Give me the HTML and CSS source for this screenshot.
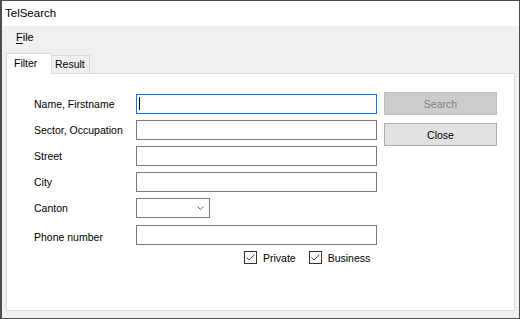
FILE: index.html
```html
<!DOCTYPE html>
<html lang="en">
<head>
    <meta charset="UTF-8">
    <title>TelSearch</title>
    <link rel="stylesheet" href="styles.css">
</head>
<body>
    <div class="window">
        <div class="titlebar">TelSearch</div>

        <div class="menubar">
            <span class="menu-item"><u>F</u>ile</span>
        </div>

        <div class="tabs">
            <div class="tab-strip">
                <div class="tab active">Filter</div>
                <div class="tab">Result</div>
            </div>

            <div class="panel">
                <div class="form">
                    <label class="field-label">Name, Firstname</label>
                    <span class="input-wrap">
                        <input class="text-input focused" type="text">
                        <span class="caret"></span>
                    </span>

                    <label class="field-label">Sector, Occupation</label>
                    <input class="text-input" type="text">

                    <label class="field-label">Street</label>
                    <input class="text-input" type="text">

                    <label class="field-label">City</label>
                    <input class="text-input" type="text">

                    <label class="field-label">Canton</label>
                    <div class="combo">
                        <svg width="7" height="4" viewBox="0 0 7 4">
                            <polyline points="0.5,0.5 3.5,3.5 6.5,0.5" fill="none" stroke="#606060" stroke-width="1"/>
                        </svg>
                    </div>

                    <label class="field-label phone-label">Phone number</label>
                    <input class="text-input phone-input" type="text">

                    <div class="checks">
                        <span class="check">
                            <span class="check-box">
                                <svg width="11" height="11" viewBox="0 0 11 11">
                                    <polyline points="1.5,5.5 4,8 9.5,2.5" fill="none" stroke="#4a4a4a" stroke-width="1"/>
                                </svg>
                            </span>
                            Private
                        </span>
                        <span class="check">
                            <span class="check-box">
                                <svg width="11" height="11" viewBox="0 0 11 11">
                                    <polyline points="1.5,5.5 4,8 9.5,2.5" fill="none" stroke="#4a4a4a" stroke-width="1"/>
                                </svg>
                            </span>
                            Business
                        </span>
                    </div>
                </div>

                <div class="actions">
                    <button class="btn" disabled>Search</button>
                    <button class="btn">Close</button>
                </div>
            </div>
        </div>
    </div>
</body>
</html>
```

FILE: styles.css
```css
* {
    margin: 0;
    padding: 0;
    box-sizing: border-box;
}

body {
    font-family: 'Liberation Sans', Arial, sans-serif;
    color: #000000;
    background-color: #ffffff;
}

.window {
    width: 520px;
    height: 319px;
    border: 1px solid #4d4d4d;
    border-left-width: 2px;
    background-color: #f0f0f0; /* Window gray */
    display: flex;
    flex-direction: column;
}

.titlebar {
    height: 25px;
    line-height: 25px;
    padding-left: 3px;
    background-color: #ffffff;
    font-size: 11.5px;
}

.menubar {
    height: 22px;
    line-height: 22px;
    padding-left: 14px;
    font-size: 11px;
}

.menu-item u {
    text-decoration-thickness: 1px;
    text-underline-offset: 2px;
}

/* Tab control */
.tabs {
    margin: 5px 4px 0 4px;
    font-size: 10.5px;
}

.tab-strip {
    display: flex;
    align-items: flex-end;
    height: 20px;
}

.tab {
    width: 38px;
    height: 18px;
    line-height: 17px;
    padding-left: 3px;
    border: 1px solid #d9d9d9;
    border-bottom: none;
    border-left: none;
    background-color: #f0f0f0;
}

.tab.active {
    width: 46px;
    height: 21px;
    line-height: 18px;
    padding-left: 7px;
    border-left: 1px solid #d9d9d9;
    background-color: #ffffff;
    margin-bottom: -1px;
    position: relative;
    z-index: 1;
}

.panel {
    width: 509px;
    height: 238px;
    border: 1px solid #d9d9d9;
    background-color: #ffffff;
    display: flex;
    align-items: flex-start;
    padding: 20px 0 0 27px;
}

/* Form fields */
.form {
    display: grid;
    grid-template-columns: 102px 241px;
    grid-auto-rows: 20px;
    row-gap: 6px;
}

.field-label {
    align-self: center;
    font-size: 10.5px;
}

.phone-label,
.phone-input {
    margin-top: 1px;
}

.phone-label {
    align-self: center;
    margin-top: 5px;
}

.text-input {
    width: 241px;
    height: 20px;
    border: 1px solid #7a7a7a;
    background-color: #ffffff;
    outline: none;
    font: inherit;
}

.text-input.focused {
    border-color: #0078d7; /* Focus blue */
}

.input-wrap {
    position: relative;
    display: block;
}

.caret {
    position: absolute;
    left: 3px;
    top: 3px;
    width: 1px;
    height: 13px;
    background-color: #000000;
}

.combo {
    width: 74px;
    height: 20px;
    border: 1px solid #7a7a7a;
    display: flex;
    justify-content: flex-end;
    align-items: center;
    padding-right: 5px;
}

.checks {
    grid-column: 2;
    display: flex;
    align-items: center;
    gap: 13px;
    padding-left: 108px;
    margin-top: 1px;
    height: 13px;
    align-self: start;
}

.check {
    display: flex;
    align-items: center;
    gap: 6px;
}

.check-box {
    width: 13px;
    height: 13px;
    border: 1px solid #333333;
    background-color: #ffffff;
    display: flex;
}

/* Buttons */
.actions {
    display: flex;
    flex-direction: column;
    gap: 8px;
    margin: -2px 0 0 7px;
}

.btn {
    width: 113px;
    height: 23px;
    border: 1px solid #adadad;
    background-color: #e1e1e1;
    font-family: inherit;
    font-size: 10.5px;
    color: #000000;
}

.btn:disabled {
    border-color: #bfbfbf;
    background-color: #cccccc;
    color: #838383;
}
```
